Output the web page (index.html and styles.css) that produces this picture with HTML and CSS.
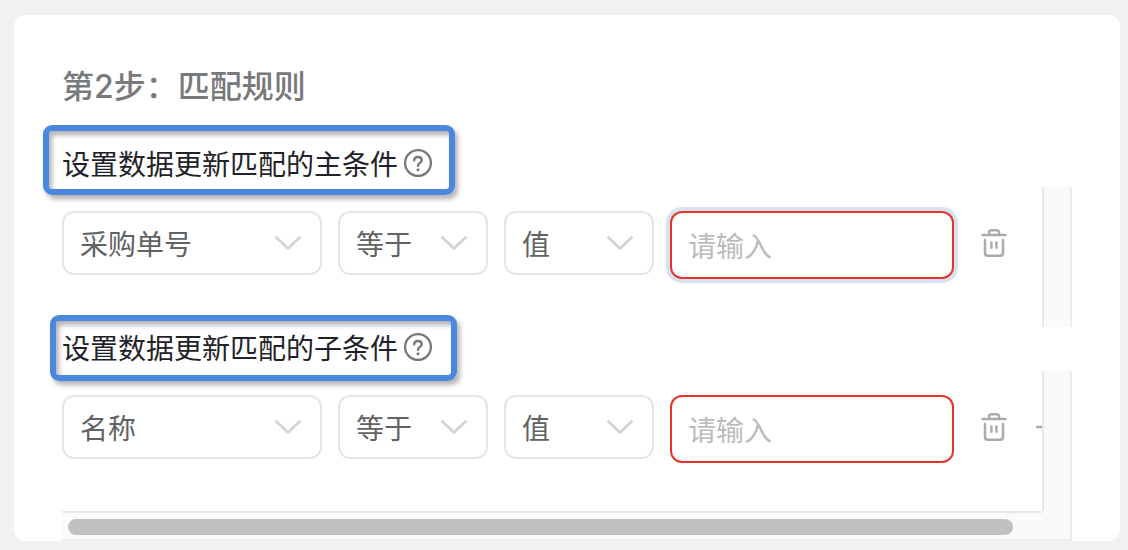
FILE: index.html
```html
<!DOCTYPE html>
<html lang="zh-CN">
<head>
    <meta charset="UTF-8">
    <meta name="viewport" content="width=device-width, initial-scale=1.0">
    <title>匹配规则</title>
    <link rel="stylesheet" href="styles.css">
</head>
<body>
    <!-- Iconos compartidos -->
    <svg class="sprite" aria-hidden="true">
        <symbol id="flecha" viewBox="0 0 26 14">
            <path d="M1.4 1.4 L13 12.4 L24.6 1.4" fill="none" stroke="currentColor" stroke-width="2.7" stroke-linecap="round" stroke-linejoin="round"/>
        </symbol>
        <symbol id="ayuda" viewBox="0 0 28 28">
            <circle cx="14" cy="14" r="12.9" fill="none" stroke="currentColor" stroke-width="2.3"/>
            <path d="M10.2 11.3 C10.2 9.2 11.8 8 14 8 C16.2 8 17.8 9.3 17.8 11.2 C17.8 13.5 14 13.8 14 16.8" fill="none" stroke="currentColor" stroke-width="2.4" stroke-linecap="round"/>
            <circle cx="14" cy="20.7" r="1.5" fill="currentColor"/>
        </symbol>
        <symbol id="papelera" viewBox="0 0 26 28">
            <g fill="none" stroke="currentColor" stroke-width="2.5" stroke-linecap="round" stroke-linejoin="round">
                <path d="M1.5 6 H24.5"/>
                <path d="M8 6 V3.6 Q8 1.3 10.4 1.3 H15.6 Q18 1.3 18 3.6 V6"/>
                <path d="M4 11 V24 Q4 26.7 6.8 26.7 H19.2 Q22 26.7 22 24 V11"/>
                <path d="M10.4 13.4 V18.8 M15.4 13.4 V18.8"/>
            </g>
        </symbol>
        <symbol id="mas" viewBox="0 0 26 28">
            <path d="M3.2 14 H22.8 M13 4.2 V23.8" fill="none" stroke="currentColor" stroke-width="2.5" stroke-linecap="round"/>
        </symbol>
    </svg>

    <main class="card">
        <h1 class="title">第2步：匹配规则</h1>

        <section class="group">
            <h2 class="group-title">
                <span>设置数据更新匹配的主条件</span>
                <button class="icon-btn help" type="button" aria-label="帮助"><svg width="28" height="28"><use href="#ayuda"/></svg></button>
                <span class="marker marker-main"></span>
            </h2>
            <div class="scroll">
                <div class="row">
                    <div class="select field">
                        <select aria-label="字段"><option>采购单号</option></select>
                        <svg width="26" height="14"><use href="#flecha"/></svg>
                    </div>
                    <div class="select">
                        <select aria-label="运算符"><option>等于</option></select>
                        <svg width="26" height="14"><use href="#flecha"/></svg>
                    </div>
                    <div class="select">
                        <select aria-label="类型"><option>值</option></select>
                        <svg width="26" height="14"><use href="#flecha"/></svg>
                    </div>
                    <input class="value active" type="text" placeholder="请输入" aria-label="值">
                    <button class="icon-btn" type="button" aria-label="删除"><svg width="26" height="28"><use href="#papelera"/></svg></button>
                </div>
                <div class="track-v"></div>
            </div>
        </section>

        <section class="group">
            <h2 class="group-title">
                <span>设置数据更新匹配的子条件</span>
                <button class="icon-btn help" type="button" aria-label="帮助"><svg width="28" height="28"><use href="#ayuda"/></svg></button>
                <span class="marker marker-sub"></span>
            </h2>
            <div class="scroll">
                <div class="row">
                    <div class="select field">
                        <select aria-label="字段"><option>名称</option></select>
                        <svg width="26" height="14"><use href="#flecha"/></svg>
                    </div>
                    <div class="select">
                        <select aria-label="运算符"><option>等于</option></select>
                        <svg width="26" height="14"><use href="#flecha"/></svg>
                    </div>
                    <div class="select">
                        <select aria-label="类型"><option>值</option></select>
                        <svg width="26" height="14"><use href="#flecha"/></svg>
                    </div>
                    <input class="value" type="text" placeholder="请输入" aria-label="值">
                    <button class="icon-btn" type="button" aria-label="删除"><svg width="26" height="28"><use href="#papelera"/></svg></button>
                    <button class="icon-btn" type="button" aria-label="添加"><svg width="26" height="28"><use href="#mas"/></svg></button>
                </div>
                <div class="track-v"></div>
                <div class="track-h"><div class="thumb"></div></div>
                <div class="corner"></div>
            </div>
        </section>
    </main>
</body>
</html>
```

FILE: styles.css
```css
* {
    box-sizing: border-box;
}

body {
    margin: 0;
    padding: 15px 8px 9px 14px;
    background: #f0f1f3;
    font-family: "Noto Sans CJK SC", sans-serif;
    font-size: 28px;
    color: #1f2329;
}

.sprite {
    display: none;
}

.card {
    padding: 48px 48px 0;
    border-radius: 12px;
    background: #fff;
}

.title {
    margin: 0 0 32px;
    font-family: Inter, "Noto Sans CJK SC", sans-serif;
    font-size: 32px;
    line-height: 48px;
    font-weight: 500;
    color: #77797a;
}

.group-title {
    position: relative;
    display: flex;
    align-items: center;
    gap: 6px;
    margin: 0 0 4px;
    font-size: 28px;
    line-height: 40px;
    font-weight: 400;
}

.icon-btn {
    display: flex;
    flex: none;
    padding: 0;
    border: none;
    background: none;
    color: #a8abb0;
    cursor: pointer;
}

.help {
    color: #77797a;
}

/* Recuadro azul sobre el encabezado */
.marker {
    position: absolute;
    border: 6px solid #4a88e0;
    border-radius: 9px;
    box-shadow: 3px 4px 5px rgba(0, 0, 0, 0.3), inset 3px 4px 5px rgba(0, 0, 0, 0.3);
    pointer-events: none;
}

.marker-main {
    left: -19px;
    top: -18px;
    width: 412px;
    height: 70px;
}

.marker-sub {
    left: -12px;
    top: -12px;
    width: 407px;
    height: 66px;
}

.scroll {
    display: grid;
    grid-template-columns: minmax(0, 1fr) 30px;
}

.row {
    display: flex;
    gap: 16px;
    height: 140px;
    padding-top: 24px;
    overflow: hidden;
}

.select {
    position: relative;
    flex: none;
    width: 150px;
    height: 64px;
}

.field {
    width: 260px;
}

.select select {
    width: 100%;
    height: 100%;
    padding: 0 48px 0 16px;
    border: 2px solid #e5e5e6;
    border-radius: 12px;
    background: #fff;
    color: #606264;
    font: inherit;
    appearance: none;
}

.select svg {
    position: absolute;
    right: 21px;
    top: 25px;
    color: #d0d2d6;
    pointer-events: none;
}

.value {
    flex: none;
    width: 284px;
    height: 68px;
    padding: 0 16px;
    border: 2px solid #e63428;
    border-radius: 12px;
    background: #fff;
    color: #606264;
    font: inherit;
    outline: none;
}

.value::placeholder {
    color: #b9bbbd;
}

.value:focus,
.value.active {
    box-shadow: 0 0 0 4px #d6e1f3;
}

.row .icon-btn {
    height: 64px;
    margin-left: 11px;
    align-items: center;
}

/* Barras de desplazamiento */
.track-v {
    border-left: 2px solid #e8e8e8;
    border-right: 2px solid #ededed;
    background: #fafafa;
}

.track-h {
    height: 30px;
    padding: 6px 29px 0 6px;
    border-top: 2px solid #e8e8e8;
    border-bottom: 2px solid #ededed;
    background: #fafafa;
}

.thumb {
    height: 16px;
    border-radius: 8px;
    background: #c1c1c1;
}

.corner {
    border-right: 2px solid #ededed;
    border-bottom: 2px solid #ededed;
    background: #fafafa;
}
```
